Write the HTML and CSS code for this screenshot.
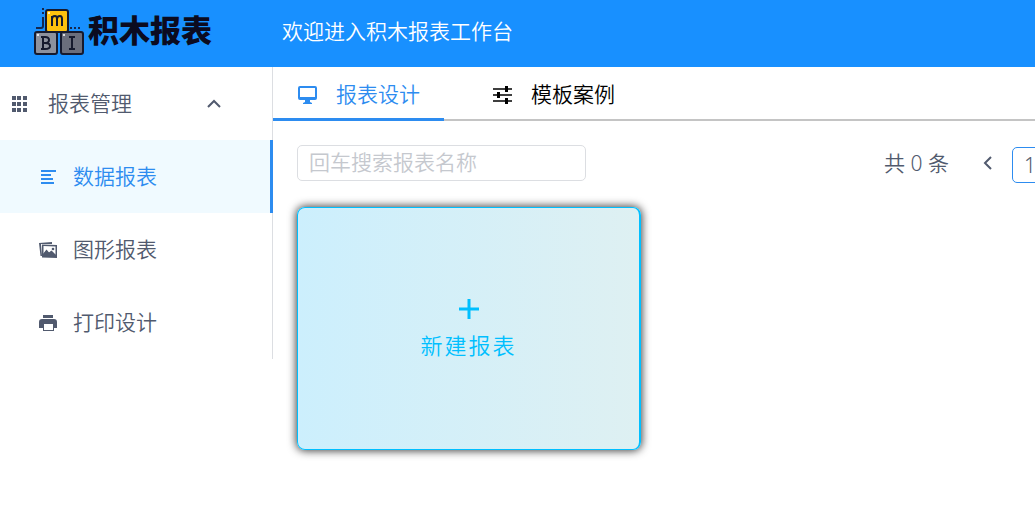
FILE: index.html
```html
<!DOCTYPE html>
<html lang="zh-CN">

<head>
    <meta charset="UTF-8">
    <meta name="viewport" content="width=device-width, initial-scale=1.0">
    <title>积木报表</title>
    <link rel="stylesheet" href="styles.css">
</head>

<body>
    <header class="header">
        <div class="logo">
            <svg class="logo-img" width="50" height="48" viewBox="0 0 50 48">
                <g fill="none" stroke="#14284f" stroke-width="2">
                    <path d="M2 20h5q2 0 2-2V9M9 6V4M9 2V0M36 20h2M40 20h2M44 20h2"/>
                </g>
                <g stroke="#161a2e" stroke-width="2">
                    <rect x="12" y="2" width="22" height="22" rx="2" fill="#ffc20e"/>
                    <rect x="1" y="24" width="22" height="22" rx="2" fill="#8d919d"/>
                    <rect x="27" y="24" width="22" height="22" rx="2" fill="#6b6e7c"/>
                </g>
                <g fill="#fff">
                    <circle cx="15" cy="5" r="1"/>
                    <circle cx="4" cy="27" r="1"/>
                    <circle cx="30" cy="27" r="1"/>
                </g>
                <g fill="none" stroke="#161a2e" stroke-width="2">
                    <path d="M18 18V8M18 11q0-3 3-3q2 0 2 3v7M23 11q0-3 3-3q2 0 2 3v7"/>
                    <path d="M9 29v12M7 29h4q4 0 4 3t-4 3h-2M11 35q5 0 5 3t-5 3h-4"/>
                    <path d="M35 29h6M38 29v12M35 41h6"/>
                </g>
            </svg>
            <span class="logo-text">积木报表</span>
        </div>
        <div class="welcome">欢迎进入积木报表工作台</div>
    </header>

    <div class="layout">
        <nav class="sidebar">
            <button class="menu-title" type="button">
                <svg class="icon" width="20" height="20" viewBox="0 0 20 20" fill="currentColor">
                    <path d="M3 2h4v4H3zM8 2h4v4H8zM14 2h4v4h-4zM3 8h4v4H3zM8 8h4v4H8zM14 8h4v4h-4zM3 14h4v4H3zM8 14h4v4H8zM14 14h4v4h-4z"/>
                </svg>
                <span class="menu-name">报表管理</span>
                <svg class="icon" width="20" height="20" viewBox="0 0 20 20" fill="none" stroke="currentColor" stroke-width="2">
                    <path d="M4 13l6-6 6 6"/>
                </svg>
            </button>
            <a class="menu-item active" href="#">
                <svg class="icon" width="20" height="20" viewBox="0 0 20 20" fill="currentColor">
                    <path d="M3 3h15v2H3zM3 7h10v2H3zM3 11h12v2H3zM3 15h13v2H3z"/>
                </svg>
                <span>数据报表</span>
            </a>
            <a class="menu-item" href="#">
                <svg class="icon" width="20" height="20" viewBox="0 0 20 20" fill="currentColor">
                    <path d="M1 3l13-1v2H3l1 12H2.500z"/>
                    <path fill-rule="evenodd" d="M4 4.500l15 .5v13L4 17.500zM5.500 6v8l3-4 2.500 3 2.500-2 4 4V6.500z"/>
                    <path d="M5 16v-2l3.500-4.500 2.500 3 2.500-2 4.500 4.500v2z"/>
                    <circle cx="15" cy="9" r="1.300"/>
                </svg>
                <span>图形报表</span>
            </a>
            <a class="menu-item" href="#">
                <svg class="icon" width="20" height="20" viewBox="0 0 20 20" fill="currentColor">
                    <path d="M5 2h10v3H5z"/>
                    <path fill-rule="evenodd" d="M4 6h12q3 0 3 3v6h-3v3H5v-3H1V9q0-3 3-3zM6 11v6h9v-6z"/>
                </svg>
                <span>打印设计</span>
            </a>
        </nav>

        <main class="main">
            <div class="tabs" role="tablist">
                <button class="tab active" type="button" role="tab" aria-selected="true">
                    <svg class="icon" width="20" height="20" viewBox="0 0 20 20" fill="currentColor">
                        <path fill-rule="evenodd" d="M3 1h15q2 0 2 2v10q0 2-2 2h-5v2l2 1v1H6v-1l2-1v-2H3q-2 0-2-2V3q0-2 2-2zM3 3v9h15V3z"/>
                    </svg>
                    <span>报表设计</span>
                </button>
                <button class="tab" type="button" role="tab" aria-selected="false">
                    <svg class="icon" width="20" height="20" viewBox="0 0 20 20" fill="currentColor">
                        <path d="M1 3.200h19v1.600H1zM1 9.200h19v1.600H1zM1 15.200h19v1.600H1z"/>
                        <path d="M13 1h3v6h-3zM5 7h3v6H5zM13 13h3v6h-3z"/>
                    </svg>
                    <span>模板案例</span>
                </button>
            </div>

            <div class="toolbar">
                <input class="search" type="text" aria-label="报表名称" placeholder="回车搜索报表名称">
                <div class="pagination">
                    <span class="total">共 0 条</span>
                    <button class="prev" type="button" aria-label="上一页">
                        <svg width="20" height="20" viewBox="0 0 20 20" fill="none" stroke="currentColor" stroke-width="2">
                            <path d="M13 4l-6 6 6 6"/>
                        </svg>
                    </button>
                    <button class="page" type="button">1</button>
                </div>
            </div>

            <button class="new-card" type="button">
                <svg width="20" height="20" viewBox="0 0 20 20" fill="currentColor">
                    <path d="M8.500 0h3v8.500H20v3h-8.500V20h-3v-8.500H0v-3h8.500z"/>
                </svg>
                <span class="new-text">新建报表</span>
            </button>
        </main>
    </div>
</body>

</html>
```

FILE: styles.css
```css
* {
    box-sizing: border-box;
}

body {
    margin: 0;
    font-family: "Liberation Sans", "Noto Sans CJK SC", sans-serif;
    font-size: 21px;
    font-weight: 350;
    line-height: 32px;
    color: #515a6e;
    background-color: #fff;
    overflow-x: hidden;
}

button,
input {
    font: inherit;
    color: inherit;
}

button {
    padding: 0;
    border: none;
    background: none;
    cursor: pointer;
}

svg {
    display: block;
    flex: none;
}

/* header */
.header {
    display: flex;
    align-items: center;
    height: 67px;
    padding-bottom: 4px;
    background-color: #1890ff;
    color: #fff;
}

.logo {
    display: flex;
    align-items: center;
    gap: 4px;
    width: 282px;
    padding-left: 34px;
}

.logo-text {
    font-size: 31px;
    font-weight: 900;
    color: #0b0b20;
}

/* left menu */
.layout {
    display: flex;
    align-items: flex-start;
}

.sidebar {
    flex: none;
    width: 273px;
    border-right: 1px solid #dcdee2;
}

.menu-title,
.menu-item {
    display: flex;
    align-items: center;
    height: 73px;
}

.menu-title {
    width: 100%;
    padding: 0 48px 0 9px;
    text-align: left;
}

.menu-name {
    flex: 1;
    margin-left: 19px;
}

.menu-item {
    gap: 15px;
    padding-left: 38px;
    color: #515a6e;
    text-decoration: none;
}

.menu-item.active {
    margin-right: -1px;
    border-right: 3px solid #2d8cf0;
    background-color: #f0faff;
    color: #2d8cf0;
}

/* content */
.main {
    flex: 1;
    min-width: 0;
}

.tabs {
    display: flex;
    gap: 24px;
    height: 54px;
    box-shadow: inset 0 -2px #c4c4c4;
}

.tab {
    display: flex;
    align-items: center;
    gap: 19px;
    padding: 5px 24px 0;
    border-bottom: 3px solid transparent;
    color: #000;
}

.tab.active {
    border-bottom-color: #2d8cf0;
    color: #2d8cf0;
}

.toolbar {
    display: flex;
    align-items: flex-start;
    padding: 24px 0 0 24px;
}

.search {
    flex: none;
    width: 289px;
    height: 36px;
    padding: 0 11px;
    border: 1px solid #dcdee2;
    border-radius: 5px;
    outline: none;
}

.search::placeholder {
    color: #c5c8ce;
}

.pagination {
    display: flex;
    flex: none;
    align-items: flex-start;
    margin-left: 298px;
    padding-top: 2px;
    font-family: "Noto Sans", "Noto Sans CJK SC", sans-serif;
}

.total {
    margin-right: 29px;
}

.prev {
    height: 32px;
    margin-right: 14px;
}

.page {
    width: 36px;
    height: 36px;
    border: 1px solid #2d8cf0;
    border-radius: 5px;
}

.new-card {
    display: flex;
    flex-direction: column;
    align-items: center;
    justify-content: center;
    gap: 12px;
    width: 344px;
    height: 243px;
    margin: 24px;
    padding-top: 4px;
    border: 1px solid #00bfff;
    border-right-width: 2px;
    border-radius: 8px;
    background: linear-gradient(to right, #cceffd, #def0f2);
    box-shadow: 0 0 9px 1px #444;
    color: #00bfff;
}

.new-text {
    font-size: 22px;
    letter-spacing: 2px;
}
```
